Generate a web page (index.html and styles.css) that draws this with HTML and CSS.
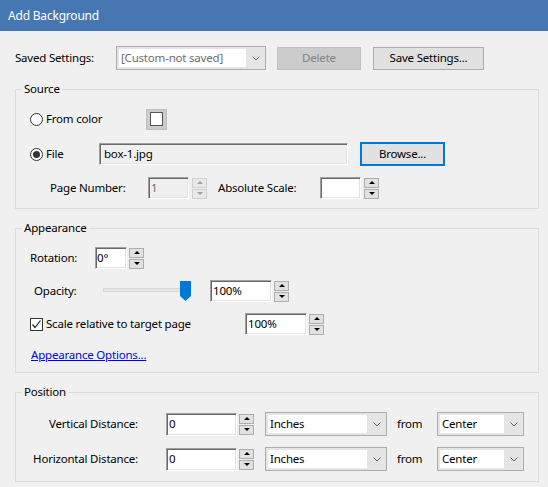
FILE: index.html
```html
<!DOCTYPE html>
<html>
<head>
<meta charset="utf-8">
<title>Add Background</title>
<link rel="stylesheet" href="styles.css">
</head>
<body>
<div class="titlebar">Add Background</div>
<div class="content">
  <div class="row saved-row">
    <span class="lbl saved-lbl">Saved Settings:</span>
    <div class="combo combo-saved"><span class="combo-field muted">[Custom-not saved]</span><span class="chev"><svg width="8" height="5" viewBox="0 0 8 5"><polyline points="0.5,0.5 4,4 7.5,0.5" fill="none" stroke="#606060" stroke-width="1"/></svg></span></div>
    <button class="btn btn-delete" disabled>Delete</button>
    <button class="btn btn-save">Save Settings...</button>
  </div>

  <fieldset class="group group-source">
    <legend>Source</legend>
    <div class="group-body source-body">
      <div class="row color-row">
        <label class="opt opt-color"><span class="radio"></span>From color</label>
        <span class="swatch"><span class="swatch-inner"></span></span>
      </div>
      <div class="row file-row">
        <label class="opt opt-file"><span class="radio checked"></span>File</label>
        <div class="field field-file readonly">box-1.jpg</div>
        <button class="btn btn-browse">Browse...</button>
      </div>
      <div class="row page-row">
        <span class="lbl lbl-page">Page Number:</span>
        <div class="field field-small readonly muted">1</div>
        <div class="spin disabled"><span class="spin-btn up"></span><span class="spin-btn down"></span></div>
        <span class="lbl lbl-scale">Absolute Scale:</span>
        <div class="field field-small"></div>
        <div class="spin"><span class="spin-btn up"></span><span class="spin-btn down"></span></div>
      </div>
    </div>
  </fieldset>

  <fieldset class="group group-appearance">
    <legend>Appearance</legend>
    <div class="group-body appearance-body">
      <div class="row rot-row">
        <span class="lbl lbl-rot">Rotation:</span>
        <div class="field field-rot">0°</div>
        <div class="spin"><span class="spin-btn up"></span><span class="spin-btn down"></span></div>
      </div>
      <div class="row op-row">
        <span class="lbl lbl-op">Opacity:</span>
        <div class="slider">
          <span class="track"></span>
          <svg class="thumb" width="11" height="20" viewBox="0 0 11 20"><polygon points="0,0 11,0 11,15 5.5,20 0,15" fill="#0078d7"/></svg>
        </div>
        <div class="field field-pct">100%</div>
        <div class="spin"><span class="spin-btn up"></span><span class="spin-btn down"></span></div>
      </div>
      <div class="row chk-row">
        <label class="opt opt-chk"><span class="check"><svg width="11" height="11" viewBox="0 0 11 11"><polyline points="1.5,5.5 4,8.5 9.5,1.5" fill="none" stroke="#222" stroke-width="1.2"/></svg></span>Scale relative to target page</label>
        <div class="field field-pct">100%</div>
        <div class="spin"><span class="spin-btn up"></span><span class="spin-btn down"></span></div>
      </div>
      <div class="row link-row">
        <a class="link" href="#">Appearance Options...</a>
      </div>
    </div>
  </fieldset>

  <fieldset class="group group-position">
    <legend>Position</legend>
    <div class="group-body position-body">
      <div class="row pos-row">
        <span class="lbl lbl-pos">Vertical Distance:</span>
        <div class="field field-dist">0</div>
        <div class="spin"><span class="spin-btn up"></span><span class="spin-btn down"></span></div>
        <div class="combo combo-unit"><span class="combo-field">Inches</span><span class="chev"><svg width="8" height="5" viewBox="0 0 8 5"><polyline points="0.5,0.5 4,4 7.5,0.5" fill="none" stroke="#606060" stroke-width="1"/></svg></span></div>
        <span class="lbl lbl-from">from</span>
        <div class="combo combo-from"><span class="combo-field">Center</span><span class="chev"><svg width="8" height="5" viewBox="0 0 8 5"><polyline points="0.5,0.5 4,4 7.5,0.5" fill="none" stroke="#606060" stroke-width="1"/></svg></span></div>
      </div>
      <div class="row pos-row pos-row2">
        <span class="lbl lbl-pos">Horizontal Distance:</span>
        <div class="field field-dist">0</div>
        <div class="spin"><span class="spin-btn up"></span><span class="spin-btn down"></span></div>
        <div class="combo combo-unit"><span class="combo-field">Inches</span><span class="chev"><svg width="8" height="5" viewBox="0 0 8 5"><polyline points="0.5,0.5 4,4 7.5,0.5" fill="none" stroke="#606060" stroke-width="1"/></svg></span></div>
        <span class="lbl lbl-from">from</span>
        <div class="combo combo-from"><span class="combo-field">Center</span><span class="chev"><svg width="8" height="5" viewBox="0 0 8 5"><polyline points="0.5,0.5 4,4 7.5,0.5" fill="none" stroke="#606060" stroke-width="1"/></svg></span></div>
      </div>
    </div>
  </fieldset>
</div>
</body>
</html>
```

FILE: styles.css
```css
* { box-sizing: border-box; }
html, body { margin: 0; padding: 0; }
body {
  width: 548px;
  height: 487px;
  overflow: hidden;
  background: #f0f0f0;
  font-family: "Noto Sans", "Open Sans", sans-serif;
  font-size: 11.5px;
  letter-spacing: -0.2px;
  line-height: 16px;
  color: #000;
}
.titlebar {
  height: 31px;
  background: #4677b3;
  color: #fff;
  padding-left: 8px;
  line-height: 31px;
  font-size: 12px;
  letter-spacing: -0.2px;
}
.content { padding: 0 9px 0 15px; }
.row { display: flex; align-items: center; }
.lbl { white-space: nowrap; }
.muted { color: #6d6d6d; }

/* saved settings */
.saved-row { margin-top: 15px; height: 24px; }
.saved-lbl { width: 101px; }
.combo {
  display: flex;
  height: 24px;
  border: 1px solid #adadad;
  background: #e5e5e5;
  padding: 2px 0 2px 2px;
}
.combo-field {
  flex: 1;
  background: #fff;
  padding-left: 2px;
  display: flex;
  align-items: center;
  white-space: nowrap;
  overflow: hidden;
}
.chev { width: 19px; display: flex; align-items: center; justify-content: center; }
.combo-saved { width: 150px; }
.btn {
  font: inherit;
  letter-spacing: inherit;
  color: #000;
  background: #e1e1e1;
  border: 1px solid #adadad;
  padding: 0;
  height: 23px;
  text-align: center;
}
.btn-delete { margin-left: 11px; width: 84px; background: #cccccc; border-color: #bfbfbf; color: #838383; }
.btn-save { margin-left: 12px; width: 111px; }

/* groups */
.group {
  margin: 11px 0 0 0;
  padding: 0;
  min-width: 0;
  border: 1px solid #dcdcdc;
}
.group legend {
  margin-left: 6px;
  padding: 0 2px;
  line-height: 16px;
}
.group-body { padding-left: 14px; }
.source-body { padding-top: 12px; padding-bottom: 9px; }
.appearance-body { padding-top: 11px; padding-bottom: 9px; }
.position-body { padding-top: 12px; padding-bottom: 10px; }

.opt { display: flex; align-items: center; white-space: nowrap; }
.radio {
  width: 13px; height: 13px;
  border: 1px solid #333;
  border-radius: 50%;
  background: #fff;
  margin-right: 3px;
  display: flex; align-items: center; justify-content: center;
}
.radio.checked::after {
  content: "";
  width: 7px; height: 7px;
  border-radius: 50%;
  background: #333;
}
.check {
  width: 13px; height: 13px;
  border: 1px solid #333;
  background: #fff;
  margin-right: 3px;
  display: flex; align-items: center; justify-content: center;
}
.color-row { height: 20px; }
.opt-color { width: 116px; }
.swatch {
  width: 21px; height: 21px;
  background: #cccccc;
  border: 1px solid #bfbfbf;
  display: flex; align-items: center; justify-content: center;
}
.swatch-inner { width: 13px; height: 14px; background: #fff; border: 1px solid #555; }

.file-row { margin-top: 13px; height: 24px; }
.opt-file { width: 69px; }
.field {
  height: 22px;
  background: #fff;
  border-top: 1px solid #a0a0a0;
  border-left: 1px solid #a0a0a0;
  border-right: 1px solid #fff;
  border-bottom: 1px solid #fff;
  box-shadow: inset 1px 1px 0 #696969, inset -1px -1px 0 #e3e3e3;
  padding-left: 2px;
  display: flex; align-items: center;
  white-space: nowrap;
}
.field.readonly { background: #f0f0f0; }
.field-file { width: 249px; padding-left: 4px; }
.btn-browse { margin-left: 12px; width: 85px; height: 24px; border: 2px solid #0078d7; }

.page-row { margin-top: 11px; height: 22px; padding-left: 20px; }
.lbl-page { width: 98px; }
.field-small { width: 41px; }
.lbl-scale { margin-left: 11px; width: 102px; }

.spin { display: flex; flex-direction: column; gap: 1px; margin-left: 3px; align-self: center; }
.spin-btn {
  width: 15px; height: 10px;
  background: #e1e1e1;
  border: 1px solid #adadad;
  display: flex; align-items: center; justify-content: center;
}
.spin-btn::after {
  content: "";
  width: 0; height: 0;
  border-left: 3px solid transparent;
  border-right: 3px solid transparent;
}
.spin-btn.up::after { border-bottom: 3px solid #000; }
.spin-btn.down::after { border-top: 3px solid #000; }
.spin.disabled .spin-btn { background: #e8e8e8; border-color: #cfcfcf; }
.spin.disabled .spin-btn.up::after { border-bottom-color: #a0a0a0; }
.spin.disabled .spin-btn.down::after { border-top-color: #a0a0a0; }

/* appearance */
.rot-row { height: 22px; }
.lbl-rot { width: 65px; }
.field-rot { width: 32px; padding-left: 1px; }
.rot-row .spin { margin-left: 2px; }

.op-row { margin-top: 11px; height: 22px; }
.lbl-op { width: 73px; padding-left: 4px; }
.slider { width: 90px; display: flex; align-items: center; }
.track {
  width: 80px; height: 4px;
  background: #e7e7e7;
  border: 1px solid #d6d6d6;
  margin-bottom: 3px;
}
.thumb { margin-left: -3px; display: block; }
.field-pct { width: 62px; }
.op-row .field-pct { margin-left: 17px; }
.op-row .spin, .chk-row .spin { margin-left: 2px; }

.chk-row { margin-top: 11px; height: 22px; }
.opt-chk { width: 215px; }

.link-row { margin-top: 12px; height: 16px; }
.link { margin-left: 1px; color: #0000ff; text-decoration: underline; }

/* position */
.pos-row { height: 24px; }
.pos-row2 { margin-top: 11px; }
.lbl-pos { width: 108px; text-align: right; }
.field-dist { width: 71px; height: 23px; margin-left: 28px; }
.pos-row .spin { margin-left: 2px; }
.combo-unit { width: 122px; margin-left: 11px; }
.lbl-from { width: 50px; padding-left: 10px; }
.combo-from { width: 87px; }
```
